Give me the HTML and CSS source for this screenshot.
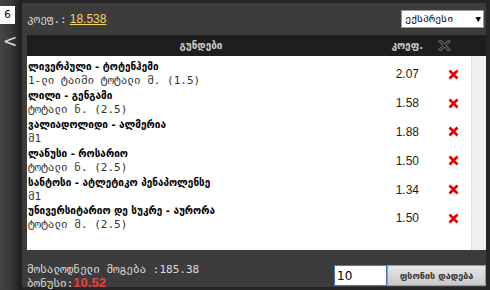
FILE: index.html
```html
<!DOCTYPE html>
<html lang="ka">
<head>
    <meta charset="UTF-8">
    <meta name="viewport" content="width=device-width, initial-scale=1.0">
    <title>ბილეთი</title>
    <link rel="stylesheet" href="styles.css">
</head>
<body>
    <div class="side">
        <div class="count">6</div>
        <div class="back">&lt;</div>
    </div>

    <div class="panel">
        <div class="info">
            <span class="label">კოეფ.:</span>
            <a class="total" href="#">18.538</a>
            <div class="select">ექსპრესი <span class="arrow">▼</span></div>
        </div>

        <div class="head">
            <div class="h-name">გუნდები</div>
            <div class="h-odd">კოეფ.</div>
            <div class="h-del">
                <svg width="13" height="13" viewBox="0 0 13 13">
                    <path d="M1 2.5 L2.5 1 L6.5 5 L10.5 1 L12 2.5 L8 6.5 L12 10.5 L10.5 12 L6.5 8 L2.5 12 L1 10.5 L5 6.5 Z" fill="none" stroke="#8a8a8a" stroke-width="1"/>
                </svg>
            </div>
        </div>

        <div class="list">
            <div class="rows" id="rows"></div>
            <div class="scroll"></div>
        </div>

        <div class="foot">
            <div class="sums">
                <div>მოსალოდნელი მოგება :185.38</div>
                <div>ბონუსი:<span class="bonus">10.52</span></div>
            </div>
            <input class="stake" type="text" value="10">
            <button class="place">ფსონის დადება</button>
        </div>
    </div>

    <script>
        const bets = [
            { teams: "ლივერპული - ტოტენჰემი", market: "1-ლი ტაიმი ტოტალი მ. (1.5)", odd: "2.07" },
            { teams: "ლილი - გენგამი", market: "ტოტალი ნ. (2.5)", odd: "1.58" },
            { teams: "ვალიადოლიდი - ალმერია", market: "მ1", odd: "1.88" },
            { teams: "ლანუსი - როსარიო", market: "ტოტალი ნ. (2.5)", odd: "1.50" },
            { teams: "სანტოსი - ატლეტიკო პენაპოლენსე", market: "მ1", odd: "1.34" },
            { teams: "უნივერსიტარიო დე სუკრე - აურორა", market: "ტოტალი მ. (2.5)", odd: "1.50" }
        ];

        const cross = '<svg width="11" height="11" viewBox="0 0 11 11"><path d="M1.5 1.5 L9.5 9.5 M9.5 1.5 L1.5 9.5" stroke="#e00000" stroke-width="2.6"/></svg>';
        const rows = document.getElementById("rows");
        bets.forEach((bet) => {
            const row = document.createElement("div");
            row.className = "row";
            row.innerHTML =
                '<div class="name"><div class="teams">' + bet.teams + '</div><div class="market">' + bet.market + '</div></div>' +
                '<div class="odd">' + bet.odd + '</div>' +
                '<div class="del">' + cross + '</div>';
            rows.appendChild(row);
        });
    </script>
</body>
</html>
```

FILE: styles.css
```css
* {
    box-sizing: border-box;
    margin: 0;
    padding: 0;
}

body {
    display: flex;
    height: 290px;
    background-color: #262626;
    font-family: "DejaVu Sans Mono", monospace;
    font-size: 11px;
    overflow: hidden;
}

/* Left strip */
.side {
    width: 22px;
    padding-top: 6px;
    background: linear-gradient(to right, #454545, #3a3a3a 45%, #1c1c1c);
}

.count {
    width: 15px;
    height: 18px;
    background-color: #fff;
    color: #000;
    font-size: 11px;
    line-height: 18px;
    text-align: center;
}

.back {
    margin-top: 7px;
    padding-left: 3px;
    color: #ddd;
    font-family: "DejaVu Sans", sans-serif;
    font-size: 17px;
    line-height: 20px;
}

/* Main panel */
.panel {
    flex: 1;
    display: flex;
    flex-direction: column;
    margin: 3px 0;
    padding-left: 5px;
    background-color: #3c3c3c;
    border-right: 4px solid #262626;
}

.info {
    display: flex;
    align-items: center;
    height: 32px;
    color: #ddd;
}

.label {
    font-size: 11px;
    margin-right: 3px;
}

.total {
    color: #f7d560;
    font-family: "Liberation Sans", Arial, sans-serif;
    font-size: 12px;
}

.select {
    margin-left: auto;
    margin-right: 2px;
    width: 83px;
    height: 18px;
    padding-left: 3px;
    background-color: #fff;
    border: 1px solid #999;
    color: #000;
    font-size: 10px;
    line-height: 16px;
}

.arrow {
    float: right;
    margin-right: 2px;
    font-size: 9px;
}

/* Table header */
.head {
    display: grid;
    grid-template-columns: 348px 48px 42px 1fr;
    align-items: center;
    height: 21px;
    background-color: #1e1e1e;
    color: #ccc;
    font-family: "DejaVu Sans", sans-serif;
    font-weight: bold;
    font-size: 10px;
}

.h-name {
    text-align: center;
}

.h-odd {
    text-align: right;
}

.h-del {
    display: flex;
    justify-content: center;
}

/* Bets list */
.list {
    display: flex;
    height: 194px;
    background-color: #fff;
}

.rows {
    flex: 1;
    padding-top: 4px;
}

.row {
    display: grid;
    grid-template-columns: 1fr 50px 24px;
    column-gap: 22px;
    align-items: center;
    padding: 0 6px 0 1px;
    height: 28.8px;
}

.teams {
    color: #000;
    font-family: "DejaVu Sans", sans-serif;
    font-weight: bold;
    font-size: 10px;
    line-height: 14px;
}

.market {
    color: #333;
    line-height: 14px;
}

.odd {
    text-align: right;
    color: #222;
    font-family: "Liberation Sans", Arial, sans-serif;
    font-size: 12px;
}

.del {
    display: flex;
    justify-content: center;
}

.scroll {
    width: 15px;
    background-color: #efefef;
    border-left: 1px solid #e0e0e0;
}

/* Footer */
.foot {
    flex: 1;
    display: flex;
    align-items: flex-end;
    padding-bottom: 1px;
}

.sums {
    flex: 1;
    margin-bottom: -4px;
    color: #ddd;
    font-size: 11px;
    line-height: 13px;
}

.bonus {
    color: #f03c3c;
    font-family: "Liberation Sans", Arial, sans-serif;
    font-weight: bold;
    font-size: 13px;
}

.stake {
    width: 53px;
    height: 21px;
    padding-left: 2px;
    border: 1px solid #4a78c0;
    font-family: "DejaVu Sans", sans-serif;
    font-size: 12px;
    outline: none;
}

.place {
    width: 99px;
    height: 21px;
    background: linear-gradient(#e6e6e6, #c9c9c9);
    border: 1px solid #999;
    color: #333;
    font-family: "DejaVu Sans", sans-serif;
    font-weight: bold;
    font-size: 9px;
}
```
